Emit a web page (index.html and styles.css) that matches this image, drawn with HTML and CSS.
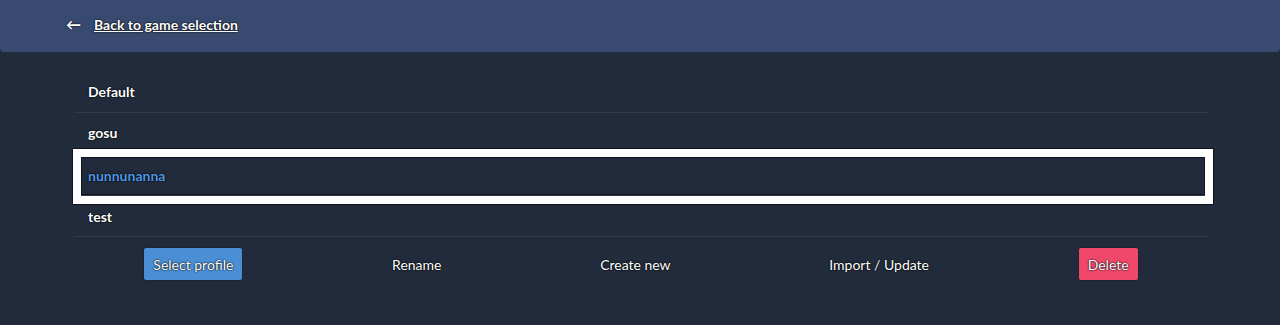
FILE: index.html
```html
<!DOCTYPE html>
<html lang="en">
<head>
    <meta charset="UTF-8">
    <meta name="viewport" content="width=device-width, initial-scale=1.0">
    <title>Profiles</title>
    <link rel="stylesheet" href="styles.css">
</head>
<body>
    <div class="top-bar">
        <span class="back-arrow">&larr;</span>
        <a href="#" class="back-link">Back to game selection</a>
    </div>

    <div class="profiles">
        <div class="profile-list">
            <div class="profile-row">Default</div>
            <div class="profile-row">gosu</div>
            <div class="profile-row selected">nunnunanna</div>
            <div class="profile-row">test</div>
        </div>
        <div class="actions">
            <button class="btn btn-primary">Select profile</button>
            <button class="btn">Rename</button>
            <button class="btn">Create new</button>
            <button class="btn">Import / Update</button>
            <button class="btn btn-danger">Delete</button>
        </div>
    </div>
</body>
</html>
```

FILE: styles.css
```css
body {
    margin: 0;
    font-family: 'Lato', 'Open Sans', sans-serif;
    font-size: 14px;
    background: #212b3b;
    color: #fff;
    min-height: 100vh;
}
.top-bar {
    height: 52px;
    background: #384a6f;
    border-radius: 0 0 4px 4px;
    display: flex;
    align-items: center;
    padding: 0 0 4px 66px;
    box-sizing: border-box;
}
.back-arrow {
    font-size: 15px;
    font-weight: bold;
    margin-right: 13px;
    text-shadow: 0 0 2px #000;
}
.back-link {
    color: #fff;
    font-weight: bold;
    font-size: 14px;
    text-decoration: underline;
    text-shadow: 0 0 2px #000, 0 0 1px #000;
}
.profiles {
    padding: 20px 72px 0 74px;
}
.profile-row {
    height: 40px;
    line-height: 40px;
    padding-left: 14px;
    border-bottom: 1px solid #2f3a4b;
    font-weight: bold;
    text-shadow: 0 0 2px #000, 0 0 1px #000;
}
.profile-row.selected {
    height: 38px;
    line-height: 37px;
    margin: 3px 3px 0 7px;
    padding-left: 7px;
    color: #5199e6;
    box-shadow: inset 0 0 0 1px #0e131c, 0 0 0 8px #fff, 0 0 0 9px #0e131c;
}
.profile-row + .profile-row:last-child {
    line-height: 42px;
}
.actions {
    display: flex;
    justify-content: space-around;
    align-items: center;
    margin-top: 10px;
}
.btn {
    font-family: inherit;
    font-size: 14px;
    color: #fff;
    background: transparent;
    border: 1px solid transparent;
    border-radius: 3px;
    padding: 0 9px;
    height: 34px;
    text-shadow: 0 0 2px #000, 0 0 1px #000;
    cursor: pointer;
}
.btn-primary {
    background: #4a8fd6;
    border-color: #1a2638;
}
.btn-danger {
    background: #f0486b;
    border-color: #1a2638;
}
```
